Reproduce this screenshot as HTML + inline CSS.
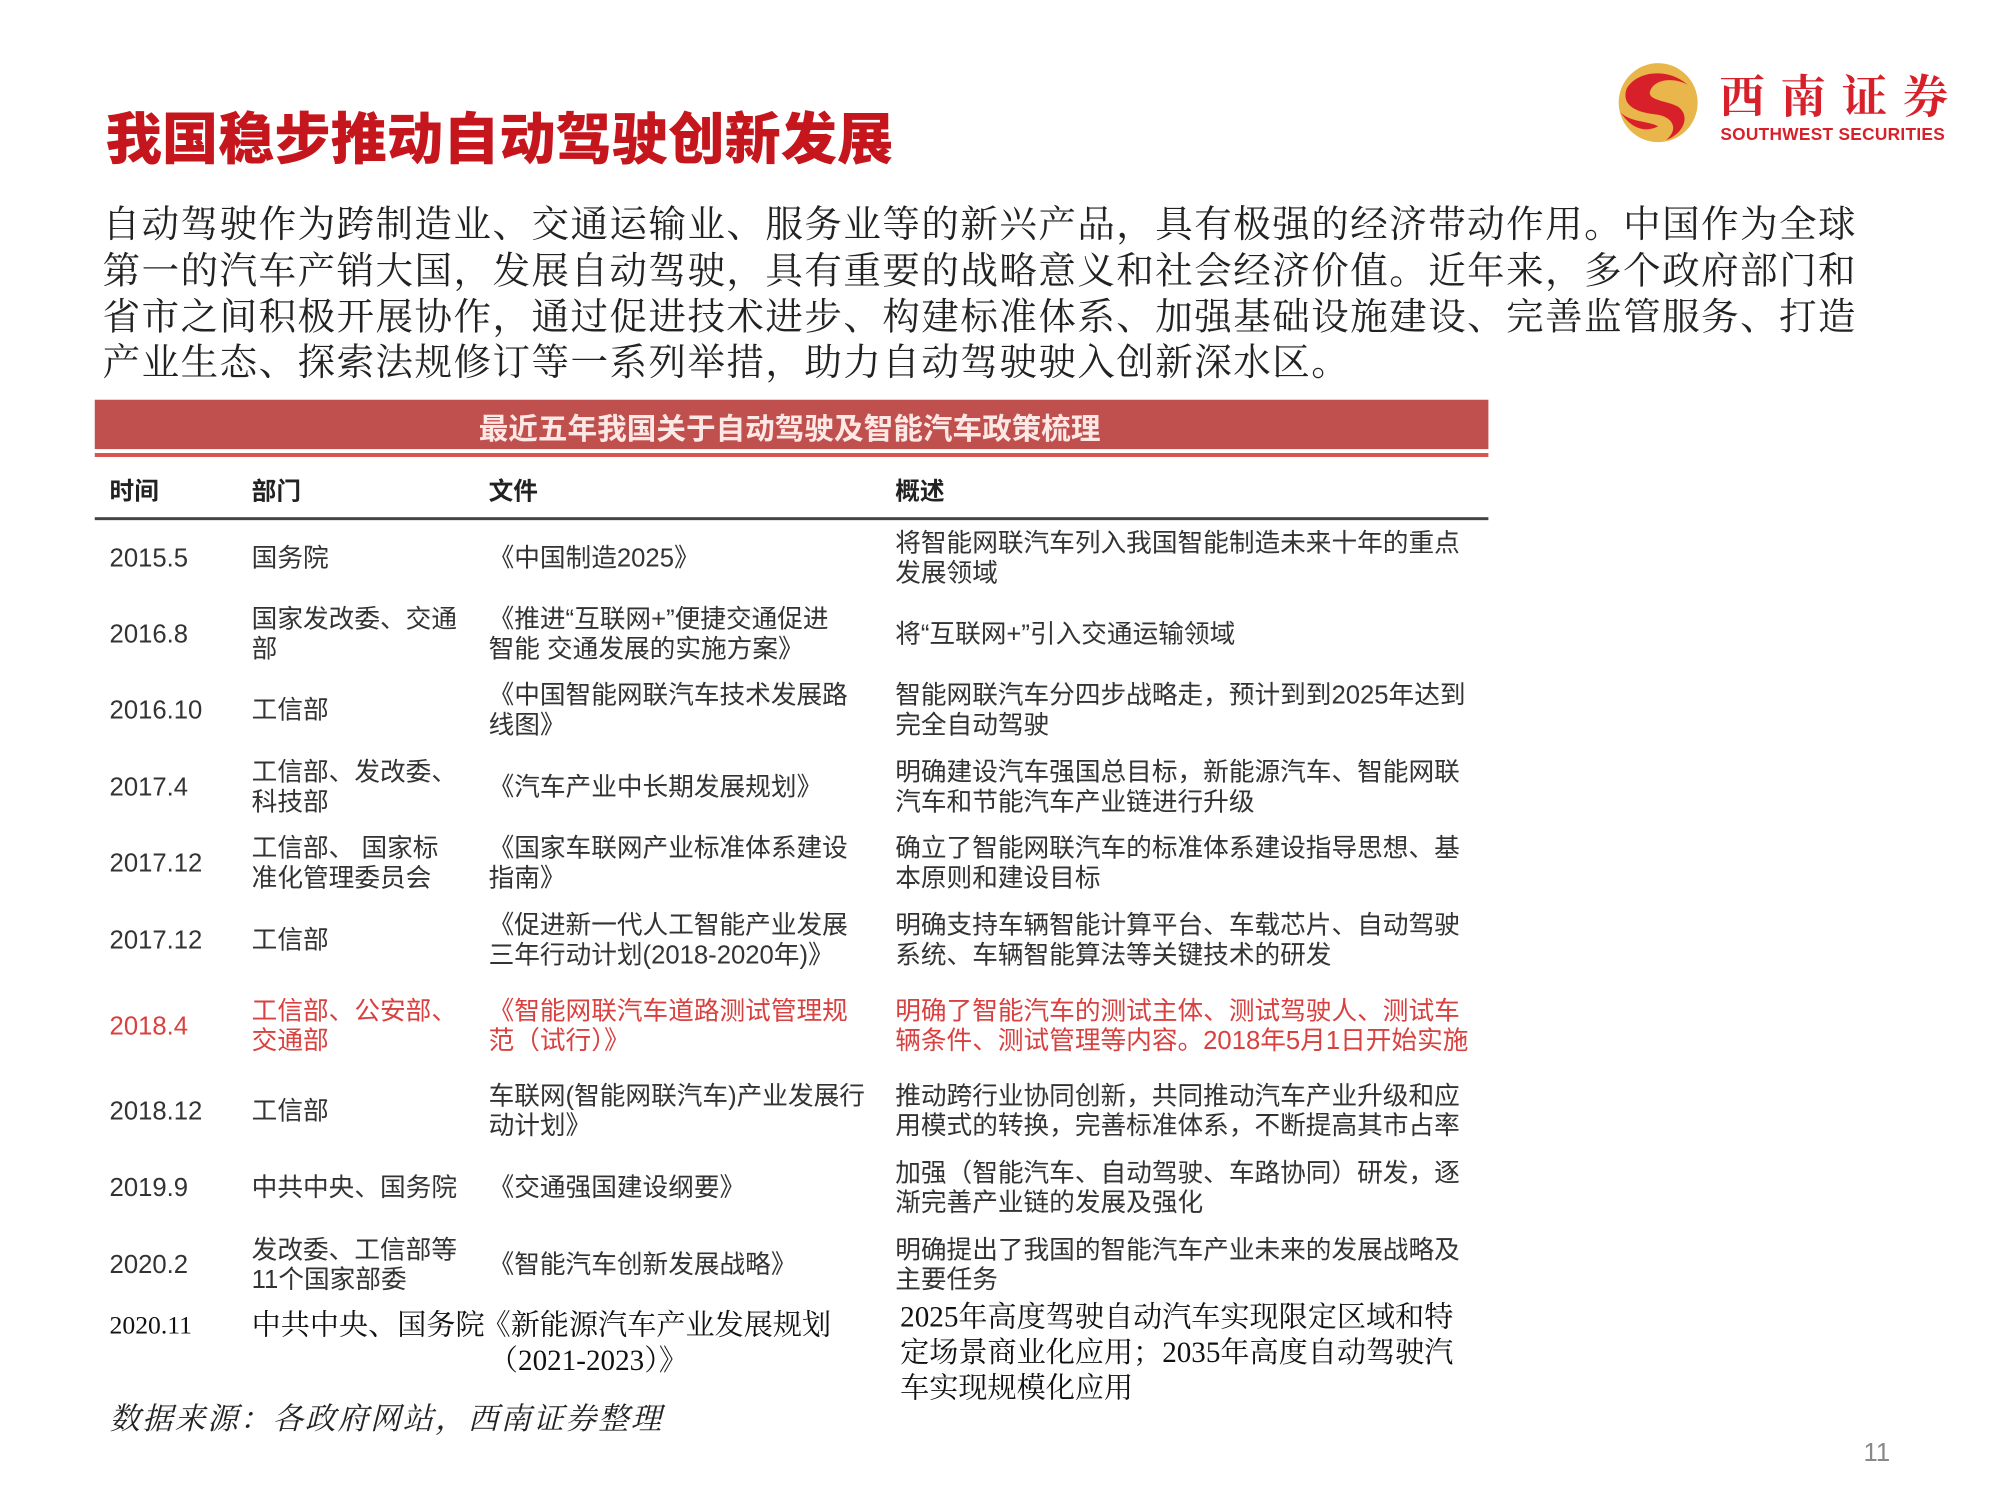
<!DOCTYPE html>
<html><head><meta charset="utf-8">
<style>
*{margin:0;padding:0;box-sizing:border-box}
body{width:2001px;height:1501px;background:#fff;position:relative;overflow:hidden;font-family:"Liberation Sans","Noto Sans CJK SC",sans-serif}
#w{position:absolute;left:0;top:0;width:2030px;height:1521px;transform:scale(0.987);transform-origin:0 0}
.a{position:absolute;white-space:nowrap}
.title{left:107px;top:96px;font-size:57px;font-weight:900;color:#c4161c;font-family:"Liberation Sans","Noto Sans CJK SC",sans-serif;letter-spacing:0px}
.p{left:104px;font-size:38px;letter-spacing:1.5px;color:#222;font-family:"Liberation Serif","Noto Serif CJK SC",serif}
.t{font-size:26px;color:#333;line-height:30px;font-family:"Liberation Sans","Noto Sans CJK SC",sans-serif}
.h{font-size:25px;font-weight:bold;color:#222;top:478px}
.r{color:#d8413f}
.s{font-size:29.5px;color:#111;line-height:36px;font-family:"Liberation Serif","Noto Serif CJK SC",serif}
</style></head><body><div id="w">
<div class="a title">我国稳步推动自动驾驶创新发展</div>

<svg class="a" style="left:1638px;top:62px" width="84" height="84" viewBox="0 0 84 84">
<circle cx="42" cy="42" r="40" fill="#e8b64a"/>
<path d="M10 28 C20 10 52 6 72 24 C58 16 38 18 34 30 C30 40 52 40 62 46 C74 54 70 72 50 80 C64 68 56 56 40 54 C22 52 4 46 10 28Z" fill="#d7202a"/>
<path d="M4 52 C14 62 30 60 42 66 C30 72 16 70 4 52Z" fill="#d7202a"/>
</svg>
<div class="a" style="left:1742px;top:62px;font-size:46px;color:#d7202a;font-weight:bold;letter-spacing:16px;font-family:'Noto Serif CJK SC',serif">西南证券</div>
<div class="a" style="left:1743px;top:126px;font-size:17.5px;color:#d7202a;font-weight:bold;letter-spacing:0.3px">SOUTHWEST SECURITIES</div>

<div class="a p" style="top:196px">自动驾驶作为跨制造业、交通运输业、服务业等的新兴产品，具有极强的经济带动作用。中国作为全球</div>
<div class="a p" style="top:243px">第一的汽车产销大国，发展自动驾驶，具有重要的战略意义和社会经济价值。近年来，多个政府部门和</div>
<div class="a p" style="top:290px">省市之间积极开展协作，通过促进技术进步、构建标准体系、加强基础设施建设、完善监管服务、打造</div>
<div class="a p" style="top:336px">产业生态、探索法规修订等一系列举措，助力自动驾驶驶入创新深水区。</div>

<div class="a" style="left:96px;top:405px;width:1412px;height:50px;background:#c0504d"></div>
<div class="a" style="left:96px;top:459px;width:1412px;height:4px;background:#d9534f"></div>
<div class="a" style="left:485px;top:410px;font-size:30px;font-weight:bold;color:#fde8e6">最近五年我国关于自动驾驶及智能汽车政策梳理</div>

<div class="a h" style="left:111px">时间</div>
<div class="a h" style="left:255px">部门</div>
<div class="a h" style="left:495px">文件</div>
<div class="a h" style="left:907px">概述</div>
<div class="a" style="left:96px;top:524px;width:1412px;height:3px;background:#444"></div>

<div class="a t" style="left:111px;top:550px">2015.5</div>
<div class="a t" style="left:255px;top:550px">国务院</div>
<div class="a t" style="left:495px;top:550px">《中国制造2025》</div>
<div class="a t" style="left:907px;top:535px">将智能网联汽车列入我国智能制造未来十年的重点<br>发展领域</div>

<div class="a t" style="left:111px;top:627px">2016.8</div>
<div class="a t" style="left:255px;top:612px">国家发改委、交通<br>部</div>
<div class="a t" style="left:495px;top:612px">《推进“互联网+”便捷交通促进<br>智能 交通发展的实施方案》</div>
<div class="a t" style="left:907px;top:627px">将“互联网+”引入交通运输领域</div>

<div class="a t" style="left:111px;top:704px">2016.10</div>
<div class="a t" style="left:255px;top:704px">工信部</div>
<div class="a t" style="left:495px;top:689px">《中国智能网联汽车技术发展路<br>线图》</div>
<div class="a t" style="left:907px;top:689px">智能网联汽车分四步战略走，预计到到2025年达到<br>完全自动驾驶</div>

<div class="a t" style="left:111px;top:782px">2017.4</div>
<div class="a t" style="left:255px;top:767px">工信部、发改委、<br>科技部</div>
<div class="a t" style="left:495px;top:782px">《汽车产业中长期发展规划》</div>
<div class="a t" style="left:907px;top:767px">明确建设汽车强国总目标，新能源汽车、智能网联<br>汽车和节能汽车产业链进行升级</div>

<div class="a t" style="left:111px;top:859px">2017.12</div>
<div class="a t" style="left:255px;top:844px">工信部、 国家标<br>准化管理委员会</div>
<div class="a t" style="left:495px;top:844px">《国家车联网产业标准体系建设<br>指南》</div>
<div class="a t" style="left:907px;top:844px">确立了智能网联汽车的标准体系建设指导思想、基<br>本原则和建设目标</div>

<div class="a t" style="left:111px;top:937px">2017.12</div>
<div class="a t" style="left:255px;top:937px">工信部</div>
<div class="a t" style="left:495px;top:922px">《促进新一代人工智能产业发展<br>三年行动计划(2018-2020年)》</div>
<div class="a t" style="left:907px;top:922px">明确支持车辆智能计算平台、车载芯片、自动驾驶<br>系统、车辆智能算法等关键技术的研发</div>

<div class="a t r" style="left:111px;top:1024px">2018.4</div>
<div class="a t r" style="left:255px;top:1009px">工信部、公安部、<br>交通部</div>
<div class="a t r" style="left:495px;top:1009px">《智能网联汽车道路测试管理规<br>范（试行）》</div>
<div class="a t r" style="left:907px;top:1009px">明确了智能汽车的测试主体、测试驾驶人、测试车<br>辆条件、测试管理等内容。2018年5月1日开始实施</div>

<div class="a t" style="left:111px;top:1110px">2018.12</div>
<div class="a t" style="left:255px;top:1110px">工信部</div>
<div class="a t" style="left:495px;top:1095px">车联网(智能网联汽车)产业发展行<br>动计划》</div>
<div class="a t" style="left:907px;top:1095px">推动跨行业协同创新，共同推动汽车产业升级和应<br>用模式的转换，完善标准体系，不断提高其市占率</div>

<div class="a t" style="left:111px;top:1188px">2019.9</div>
<div class="a t" style="left:255px;top:1188px">中共中央、国务院</div>
<div class="a t" style="left:495px;top:1188px">《交通强国建设纲要》</div>
<div class="a t" style="left:907px;top:1173px">加强（智能汽车、自动驾驶、车路协同）研发，逐<br>渐完善产业链的发展及强化</div>

<div class="a t" style="left:111px;top:1266px">2020.2</div>
<div class="a t" style="left:255px;top:1251px">发改委、工信部等<br>11个国家部委</div>
<div class="a t" style="left:495px;top:1266px">《智能汽车创新发展战略》</div>
<div class="a t" style="left:907px;top:1251px">明确提出了我国的智能汽车产业未来的发展战略及<br>主要任务</div>

<div class="a s" style="left:111px;top:1325px;font-size:26px">2020.11</div>
<div class="a s" style="left:255px;top:1325px">中共中央、国务院</div>
<div class="a s" style="left:488px;top:1325px">《新能源汽车产业发展规划<br>&nbsp;（2021-2023）》</div>
<div class="a s" style="left:912px;top:1317px">2025年高度驾驶自动汽车实现限定区域和特<br>定场景商业化应用；2035年高度自动驾驶汽<br>车实现规模化应用</div>

<div class="a" style="left:111px;top:1412px;font-size:31px;font-style:italic;color:#222;font-family:'Liberation Serif','Noto Serif CJK SC',serif;letter-spacing:2px">数据来源：各政府网站，西南证券整理</div>
<div class="a" style="left:1888px;top:1456px;font-size:26px;color:#888">11</div>
</div></body></html>
